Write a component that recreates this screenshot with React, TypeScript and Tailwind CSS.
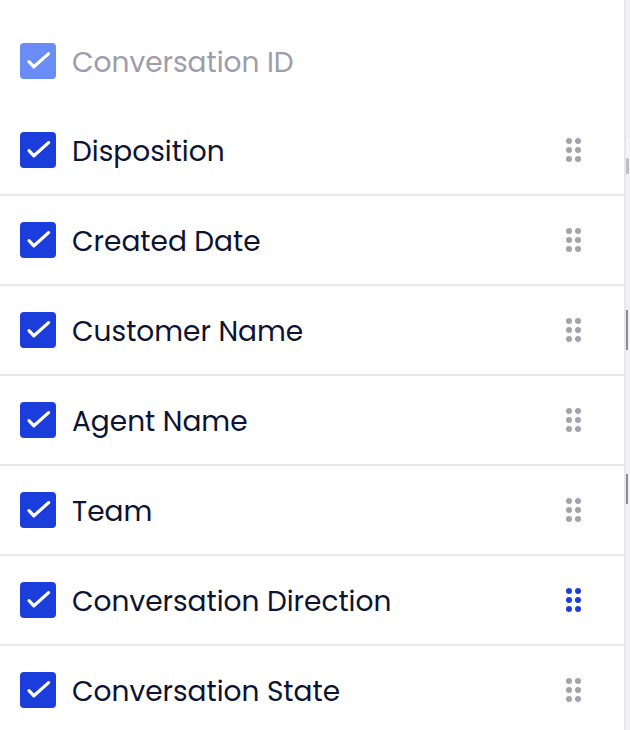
import React from "react";

type Column = { label: string; locked?: boolean; active?: boolean };

const columns: Column[] = [
    { label: "Conversation ID", locked: true },
    { label: "Disposition" },
    { label: "Created Date" },
    { label: "Customer Name" },
    { label: "Agent Name" },
    { label: "Team" },
    { label: "Conversation Direction", active: true },
    { label: "Conversation State" },
];

const Check = ({ locked }: { locked?: boolean }) => (
    <span
        className={`flex h-9 w-9 shrink-0 items-center justify-center rounded-[4px] ${
            locked ? "bg-[#6a8cf6]" : "bg-[#1b3ddb]"
        }`}
    >
        <svg width="36" height="36" viewBox="0 0 36 36" fill="none">
            <path d="M9 18.6l4.9 5.2L28.6 10.6" stroke="white" strokeWidth="3.2" strokeLinecap="round" strokeLinejoin="round" />
        </svg>
    </span>
);

const Grip = ({ active }: { active?: boolean }) => (
    <div className={`grid grid-cols-2 gap-[3px] ${active ? "text-[#1b3ddb]" : "text-[#a3a3ae]"}`}>
        {[0, 1, 2, 3, 4, 5].map((i) => (
            <span key={i} className="h-[6px] w-[6px] rounded-full bg-current" />
        ))}
    </div>
);

const App = () => {
    return (
        <div className="flex h-[730px] w-[630px] overflow-hidden bg-white font-['Poppins','Open_Sans',sans-serif]">
            {/* Column list */}
            <div className="w-[626px] shrink-0 border-r-2 border-[#e6e6ec] pt-4">
                {columns.map((col, i) => (
                    <div
                        key={col.label}
                        className={`flex h-[90px] items-center pl-5 pr-[43px] ${i > 0 ? "border-b-2 border-[#e6e6ec]" : ""}`}
                    >
                        <Check locked={col.locked} />
                        <span
                            className={`ml-4 mt-[3px] flex-1 text-[28px] leading-none ${
                                col.locked ? "text-[#9d9dab]" : "text-[#0d1330]"
                            }`}
                        >
                            {col.label}
                        </span>
                        {!col.locked && <Grip active={col.active} />}
                    </div>
                ))}
            </div>

            {/* Peek of the table behind */}
            <div className="flex w-[4px] flex-col bg-[#f1f1f4]">
                <div className="h-[138px]" />
                <div className="h-[20px] w-[3px] bg-[#f6f6f8]" />
                <div className="h-[16px] w-[3px] rounded-sm bg-[#bdbdc4]" />
                <div className="h-[136px]" />
                <div className="h-[40px] w-[3px] border-l-2 border-[#8c8c96]" />
                <div className="h-[124px]" />
                <div className="h-[30px] w-[3px] border-l-2 border-[#8c8c96]" />
            </div>
        </div>
    );
};

export default App;
